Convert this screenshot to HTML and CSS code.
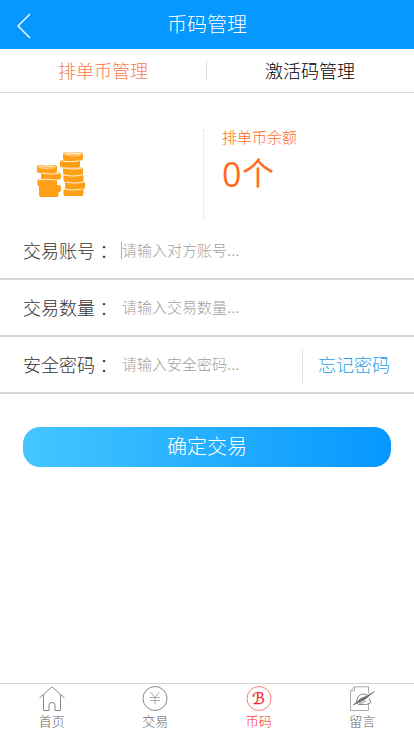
FILE: index.html
```html
<!DOCTYPE html>
<html lang="zh-CN">
<head>
<meta charset="utf-8">
<meta name="viewport" content="width=device-width, initial-scale=1">
<title>币码管理</title>
<link rel="stylesheet" href="styles.css">
</head>
<body>
<header class="header">
  <a class="back" href="#"><svg width="14" height="26" viewBox="0 0 14 26"><path d="M13 1 1 13 13 25"/></svg></a>
  <h1>币码管理</h1>
</header>
<nav class="tabs">
  <a class="tab active" href="#">排单币管理</a>
  <a class="tab" href="#">激活码管理</a>
</nav>
<section class="balance">
  <div class="coins">
    <svg width="50" height="48" viewBox="0 0 50 48">
      <g class="coin">
        <rect x="2" y="33" width="19.500" height="12" rx="2"/>
        <rect x="17" y="33" width="7" height="7" rx="2"/>
        <rect x="0.500" y="27" width="19.500" height="7.500" rx="2"/>
        <rect x="4" y="20.500" width="20" height="7" rx="2"/>
        <rect x="0" y="13" width="20" height="8" rx="2"/>
        <rect x="26.500" y="36.500" width="20" height="7.500" rx="2"/>
        <rect x="28" y="29.500" width="20" height="7.500" rx="2"/>
        <rect x="26.500" y="22.500" width="20" height="7.500" rx="2"/>
        <rect x="26" y="15.500" width="20" height="7.500" rx="2"/>
        <rect x="23" y="8" width="20" height="7.500" rx="2"/>
        <rect x="26" y="0.500" width="20" height="8" rx="2"/>
      </g>
      <g class="shade"><ellipse cx="10" cy="15.500" rx="8.500" ry="1.700"/><ellipse cx="36" cy="2.800" rx="8.500" ry="1.700"/></g>
      <g class="rim">
        <path d="M1.500 14.500q8.500-1.500 17 0M5 21q9 2 18 0M2 28q8-1.500 17 0M27.500 2q8.500-1.500 17 0M24 8.800q9 2 18 0M27 16q9 2 18 0M27 23q9 2 18 0M29 30q9 2 18 0M27 37q9 2 18 0"/>
      </g>
    </svg>
  </div>
  <div class="amount">
    <p class="caption">排单币余额</p>
    <p class="value"><span class="number">0</span>个</p>
  </div>
</section>
<form class="form">
  <label class="row"><span class="name">交易账号<i lang="zh-TW">：</i></span><span class="caret"></span><input type="text" placeholder="请输入对方账号..."></label>
  <label class="row"><span class="name">交易数量<i lang="zh-TW">：</i></span><span class="caret off"></span><input type="text" placeholder="请输入交易数量..."></label>
  <div class="row"><span class="name">安全密码<i lang="zh-TW">：</i></span><span class="caret off"></span><input type="password" placeholder="请输入安全密码..."><a class="forgot" href="#">忘记密码</a></div>
  <button class="submit" type="button">确定交易</button>
</form>
<footer class="bar">
  <a href="#"><svg viewBox="0 0 26 26"><path d="M.5 12 13 .8 25.500 12M4.500 9v15.500H10V19q0-2.500 3-2.500t3 2.500v5.500h5.500V9"/></svg>首页</a>
  <a href="#"><svg viewBox="0 0 26 26"><circle cx="13" cy="12.500" r="12"/><path class="faint" d="m8.500 6 4.500 5.500L17.500 6M13 11.500v7M8 11.500h10M8 14.500h10"/></svg>交易</a>
  <a class="active" href="#"><svg viewBox="0 0 26 26"><circle cx="13" cy="12.500" r="12"/><text x="12.500" y="18">ℬ</text></svg>币码</a>
  <a href="#"><svg viewBox="0 0 26 26"><path class="faint" d="M5.500.8H19.500V7M19.500 17v7.500H1.500V4.800L5.500.8v4h-4"/><path d="M18 8.500Q10 7 8.500 12q-2 5 1 6.500h7q3 0 5.500-2l-2-4M9.500 14.500q3-4 7-2.500M10 17q4 1 7-2.500"/><path class="pen" d="M4 19 11 13.500 25.500 5.500 15 14Z"/></svg>留言</a>
</footer>
</body>
</html>
```

FILE: styles.css
```css
* { box-sizing: border-box; }
body {
  margin: 0;
  height: 736px;
  display: flex;
  flex-direction: column;
  background: #fff;
  color: #000;
  font-family: "Liberation Sans", "Noto Sans CJK SC", sans-serif;
  font-weight: 300;
  overflow: hidden;
}
a { color: inherit; text-decoration: none; }
p, h1 { margin: 0; }
svg { display: block; fill: none; }
.header {
  flex: none;
  height: 49px;
  display: grid;
  grid-template-columns: 48px 1fr 48px;
  align-items: center;
  background: #0697ff;
  color: #fff;
}
.back { padding: 3px 0 0 17px; }
.back svg { stroke: #fff; stroke-width: 1.4; }
.header h1 { font-size: 20px; line-height: 48px; font-weight: 300; text-align: center; }
.tabs {
  flex: none;
  height: 44px;
  display: grid;
  grid-template-columns: 207px 206px;
  align-items: center;
  border-bottom: 1px solid #d9d9d9;
}
.tab { height: 19px; line-height: 22px; font-size: 18px; text-align: center; }
.tab.active { color: #f97b4d; border-right: 1px solid #d9d9d9; }
.balance { flex: none; height: 130px; padding-top: 37px; display: flex; }
.coins { width: 204px; height: 90px; padding: 22px 0 0 37px; border-right: 1px dotted #d5d5d5; }
.coin { fill: #ff9f16; }
.shade { fill: #ffc36a; }
.rim { stroke: #fff1d9; stroke-width: 1.1; }
.amount { padding-left: 18px; color: #ff6b20; }
.caption { font-size: 15px; line-height: 16px; }
.value { display: flex; font-size: 32px; line-height: 40px; margin-top: 8px; font-weight: 400; }
.number { width: 20px; font-family: "Open Sans", sans-serif; font-size: 34px; line-height: 40px; }
.row {
  height: 57px;
  display: flex;
  align-items: center;
  border-bottom: 2px solid #d7d7d7;
  padding-left: 23px;
}
.name { display: flex; width: 98px; height: 26px; line-height: 26px; margin-top: 2px; font-size: 18px; color: #333; white-space: nowrap; }
.name i { font-style: normal; font-family: "Noto Sans CJK TC", sans-serif; line-height: 25px; }
.caret { width: 1px; height: 17px; background: #aaa; }
.caret.off { background: transparent; }
input {
  flex: 1;
  min-width: 0;
  height: 30px;
  padding: 0;
  border: 0;
  background: none;
  outline: 0;
  font: inherit;
  font-size: 15px;
}
input::placeholder { color: #a0a0a0; opacity: 1; }
.forgot {
  width: 112px;
  height: 33px;
  margin-top: 4px;
  padding-left: 15px;
  border-left: 1px solid #dbe4ea;
  font-size: 18px;
  line-height: 32px;
  color: #259fe8;
}
.submit {
  display: block;
  width: 368px;
  height: 40px;
  margin: 33px 23px 0;
  padding: 0;
  border: 0;
  border-radius: 17px;
  background: linear-gradient(90deg, #45c6ff, #0697ff);
  color: #fff;
  font: inherit;
  font-size: 20px;
  line-height: 40px;
}
.bar {
  flex: none;
  height: 53px;
  margin-top: auto;
  display: grid;
  grid-template-columns: repeat(4, 1fr);
  border-top: 1px solid #d2d2d2;
  font-size: 13px;
  line-height: 20px;
  color: #666;
}
.bar a { display: flex; flex-direction: column; align-items: center; padding-top: 2px; }
.bar svg { width: 26px; height: 26px; stroke: #888; stroke-width: 1; }
.bar .faint { stroke: #aaa; }
.bar .pen { fill: #666; stroke: #666; stroke-width: .5; }
.bar .active { color: #f52222; }
.bar .active svg { stroke: #f77; }
.bar text {
  fill: #f52222;
  stroke: #f52222;
  stroke-width: .3;
  font: 16px "DejaVu Serif", "DejaVu Sans", serif;
  text-anchor: middle;
}
```
